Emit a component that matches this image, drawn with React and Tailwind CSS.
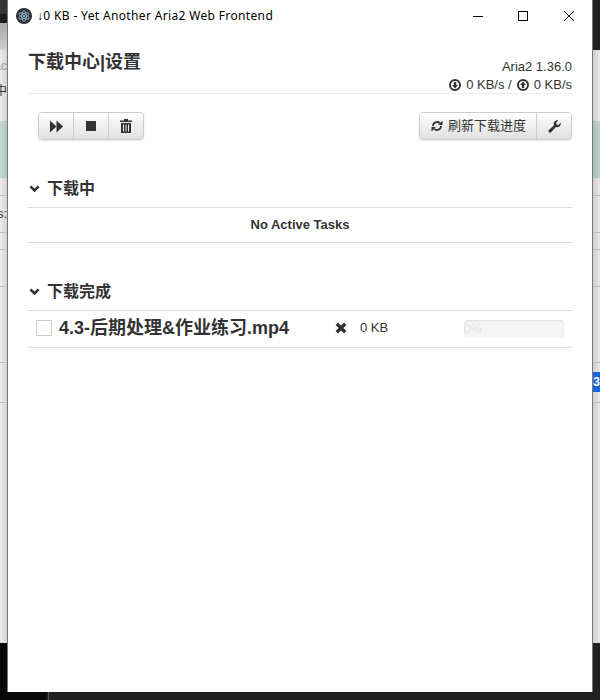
const fontStack = "font-['Liberation_Sans','Noto_Sans_CJK_SC',sans-serif]";
const btnClass =
  "flex h-full items-center justify-center bg-gradient-to-b from-white to-[#e0e0e0] text-[#333]";

function ElectronLogo() {
  return (
    <svg width="16" height="16" viewBox="0 0 16 16" fill="none">
      <circle cx="8" cy="8" r="8" fill="#2b2e3a" />
      <g stroke="#9fc3d0" strokeWidth="0.8">
        <ellipse cx="8" cy="8" rx="5.6" ry="2.2" transform="rotate(30 8 8)" />
        <ellipse cx="8" cy="8" rx="5.6" ry="2.2" transform="rotate(90 8 8)" />
        <ellipse cx="8" cy="8" rx="5.6" ry="2.2" transform="rotate(150 8 8)" />
      </g>
      <circle cx="8" cy="8" r="1" fill="#9fc3d0" />
    </svg>
  );
}

function WindowControls() {
  return (
    <div className="flex items-center">
      <svg width="10" height="10" viewBox="0 0 10 10" className="mr-[35px]">
        <path d="M0 5.5h10" stroke="#000" strokeWidth="1" />
      </svg>
      <svg width="10" height="10" viewBox="0 0 10 10" className="mr-[36px]">
        <rect x="0.5" y="0.5" width="9" height="9" fill="none" stroke="#000" strokeWidth="1" />
      </svg>
      <svg width="10" height="10" viewBox="0 0 10 10">
        <path d="M0 0l10 10M10 0L0 10" stroke="#000" strokeWidth="1" />
      </svg>
    </div>
  );
}

function ForwardIcon() {
  return (
    <svg width="13" height="13" viewBox="0 0 13 13" fill="#333">
      <path d="M0 0.5l6.5 6-6.5 6zM6.5 0.5l6.5 6-6.5 6z" />
    </svg>
  );
}

function TrashIcon() {
  return (
    <svg width="12" height="14" viewBox="0 0 12 14" fill="#333">
      <path d="M4 0h4v1.5h4V3H0V1.5h4zM1 4h10v10H1zM3 5.5v7h1v-7zM5.5 5.5v7h1v-7zM8 5.5v7h1v-7z" fillRule="evenodd" />
    </svg>
  );
}

function ChevronIcon() {
  return (
    <svg width="11" height="8" viewBox="0 0 11 8" className="ml-[1px] mr-[7px]">
      <path d="M1.4 1.4l4.1 4.1 4.1-4.1" fill="none" stroke="#333" strokeWidth="2.6" />
    </svg>
  );
}

function RefreshIcon() {
  return (
    <svg width="12" height="12" viewBox="0 0 12 12" fill="none" className="mr-[5px]">
      <path d="M2 6a4 4 0 0 1 6.8-2.8" stroke="#333" strokeWidth="1.8" />
      <path d="M10 6a4 4 0 0 1-6.8 2.8" stroke="#333" strokeWidth="1.8" />
      <path d="M11.5 0.5v4.5H7zM0.5 11.5V7H5z" fill="#333" />
    </svg>
  );
}

function WrenchIcon() {
  return (
    <svg width="13" height="13" viewBox="0 0 13 13" fill="#333">
      <path d="M12.6 2.6a3.6 3.6 0 0 1-4.7 4.4L3 12.2a1.3 1.3 0 0 1-2-.1 1.3 1.3 0 0 1-.1-2L6 5.2A3.6 3.6 0 0 1 10.4.4L8.2 2.6l.3 2 2 .3z" />
    </svg>
  );
}

function CircleArrow({ up, className = "" }) {
  return (
    <svg width="12" height="12" viewBox="0 0 12 12" className={className}>
      <circle cx="6" cy="6" r="5" fill="none" stroke="#333" strokeWidth="2" />
      <path
        d={up ? "M6 2.6L9 6H7.2v3H4.8V6H3z" : "M6 9.4L9 6H7.2V3H4.8v3H3z"}
        fill="#333"
      />
    </svg>
  );
}

function RemoveIcon() {
  return (
    <svg width="12" height="12" viewBox="0 0 12 12">
      <path d="M1.8 1.8l8.4 8.4M10.2 1.8l-8.4 8.4" stroke="#333" strokeWidth="3.4" />
    </svg>
  );
}

function SectionHeader({ title }) {
  return (
    <div className="flex h-[37px] items-center border-b border-[#ddd] pb-[1px]">
      <ChevronIcon />
      <span className="text-[16px] font-bold leading-none text-[#333]">{title}</span>
    </div>
  );
}

function StripRow({ height, className = "", children }) {
  return (
    <div
      className={`flex shrink-0 items-center justify-end overflow-hidden whitespace-nowrap border-b border-[#bbb] ${className}`}
      style={{ height }}
    >
      {children}
    </div>
  );
}

function LeftStrip() {
  const rowBg = "bg-gradient-to-r from-[#ececec] to-[#d4d4d4]";
  return (
    <div className="flex h-full w-[8px] shrink-0 flex-col border-r border-[#777] bg-[#080808]">
      <div className="h-[14px] shrink-0 bg-[#333]" />
      <div className="h-[9px] shrink-0 bg-[#1c1c1c]" />
      <div className="h-[27px] shrink-0 bg-gradient-to-b from-[#a8a8a8] to-[#cfcfcf]" />
      <div className={`flex h-[71px] shrink-0 flex-col items-end overflow-hidden pt-[10px] text-[12px] text-[#999] ${rowBg}`}>
        <span className="leading-none">ac</span>
        <span className="mt-[13px] leading-none text-[#333]">中</span>
      </div>
      <div className="h-[57px] shrink-0 bg-gradient-to-r from-[#c4dcd0] to-[#afc7bb]" />
      <StripRow height={18} className={rowBg} />
      <StripRow height={37} className={`text-[13px] text-[#333] ${rowBg}`}>
        s:
      </StripRow>
      <StripRow height={17} className={rowBg} />
      <StripRow height={37} className={rowBg} />
      <StripRow height={76} className={rowBg} />
      <StripRow height={40} className={rowBg} />
      <div className={`h-[240px] shrink-0 ${rowBg}`} />
    </div>
  );
}

function RightStrip() {
  const rowBg = "bg-gradient-to-l from-[#e6e6e6] to-[#cfcfcf]";
  return (
    <div className="flex h-full w-[8px] shrink-0 flex-col border-l border-[#777] bg-[#222]">
      <div className="h-[50px] shrink-0 bg-[#222]" />
      <div className={`h-[71px] shrink-0 ${rowBg}`} />
      <div className="h-[57px] shrink-0 bg-gradient-to-l from-[#bdd5c9] to-[#a9c1b5]" />
      <StripRow height={18} className={rowBg} />
      <StripRow height={37} className={rowBg} />
      <StripRow height={17} className={rowBg} />
      <StripRow height={37} className={rowBg} />
      <StripRow height={76} className={rowBg} />
      <div className={`h-[9px] shrink-0 ${rowBg}`} />
      <div className="flex h-[20px] shrink-0 items-center justify-end overflow-hidden whitespace-nowrap bg-[#1565d8] text-[12px] font-bold text-white">
        .53
      </div>
      <StripRow height={11} className={rowBg} />
      <div className={`h-[240px] shrink-0 ${rowBg}`} />
    </div>
  );
}

export default function App() {
  return (
    <div className={`flex h-[700px] w-[600px] flex-col overflow-hidden bg-[#222] ${fontStack}`}>
      <div className="flex h-[692px] shrink-0">
        <LeftStrip />

        <div className="flex h-full min-w-0 flex-1 flex-col bg-white pt-[1px]">
          <div className="flex h-[29px] shrink-0 items-center justify-between pl-[8px] pr-[18px]">
            <div className="flex items-center">
              <ElectronLogo />
              <span className="ml-[5px] font-['Noto_Sans',sans-serif] text-[12px] leading-none tracking-[0.35px] text-black">
                ↓0 KB - Yet Another Aria2 Web Frontend
              </span>
            </div>
            <WindowControls />
          </div>

          <div className="px-[20px]">
            <div className="flex h-[64px] items-start justify-between border-b border-[#eee]">
              <h1 className="mt-[21px] text-[18px] font-bold leading-[22px] text-[#333]">下载中心|设置</h1>
              <div className="mt-[28px] text-right text-[13px] leading-[18px] text-[#333]">
                <div>Aria2 1.36.0</div>
                <div className="flex items-center justify-end">
                  <CircleArrow className="mr-[5px]" />
                  <span>0 KB/s /</span>
                  <CircleArrow up className="mx-[5px]" />
                  <span>0 KB/s</span>
                </div>
              </div>
            </div>

            <div className="mt-[18px] flex h-[28px] items-center justify-between pl-[10px]">
              <div className="flex h-full overflow-hidden rounded-[4px] border border-[#ccc] shadow-[0_1px_2px_rgba(0,0,0,0.1)]">
                <div className={`${btnClass} w-[34px]`}>
                  <ForwardIcon />
                </div>
                <div className={`${btnClass} w-[35px] border-l border-[#ccc]`}>
                  <div className="h-[10px] w-[10px] bg-[#333]" />
                </div>
                <div className={`${btnClass} w-[35px] border-l border-[#ccc]`}>
                  <TrashIcon />
                </div>
              </div>

              <div className="flex h-full overflow-hidden rounded-[4px] border border-[#ccc] shadow-[0_1px_2px_rgba(0,0,0,0.1)]">
                <div className={`${btnClass} w-[116px] pl-[1px] text-[13px]`}>
                  <RefreshIcon />
                  刷新下载进度
                </div>
                <div className={`${btnClass} w-[35px] border-l border-[#ccc]`}>
                  <WrenchIcon />
                </div>
              </div>
            </div>

            <div className="mt-[31px]">
              <SectionHeader title="下载中" />
              <div className="flex h-[35px] items-center justify-center border-b border-[#ddd] text-[13px] font-bold text-[#333]">
                No Active Tasks
              </div>
            </div>

            <div className="mt-[31px]">
              <SectionHeader title="下载完成" />
              <div className="flex h-[37px] items-center border-b border-[#ddd] pb-[2px]">
                <div className="ml-[8px] h-[16px] w-[16px] border border-[#ccc] bg-white" />
                <span className="ml-[7px] w-[276px] text-[18px] font-bold leading-none text-[#333]">
                  4.3-后期处理&作业练习.mp4
                </span>
                <RemoveIcon />
                <span className="ml-[13px] w-[104px] text-[13px] text-[#333]">0 KB</span>
                <div className="mt-[2px] flex h-[18px] w-[100px] items-center rounded-[4px] bg-[#f5f5f5] shadow-[inset_0_1px_2px_rgba(0,0,0,0.1)]">
                  <span className="text-[12px] leading-none text-[#e2e2e2]">0%</span>
                </div>
              </div>
            </div>
          </div>
        </div>

        <RightStrip />
      </div>

      <div className="flex h-[8px] shrink-0">
        <div className="h-full w-[46px] bg-[#080808]" />
        <div className="h-full w-[3px] border-r border-[#555] bg-[#1a1a1a]" />
        <div className="h-full flex-1 bg-[#222]" />
      </div>
    </div>
  );
}
